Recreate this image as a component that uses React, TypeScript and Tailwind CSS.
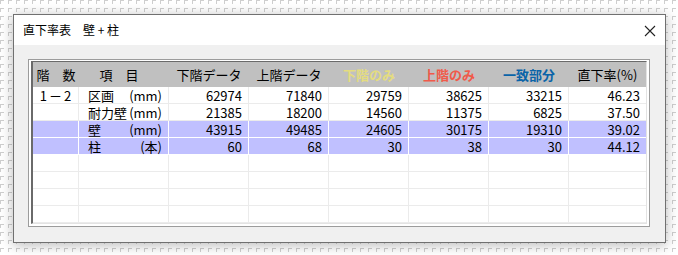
import React from "react";

type Row = { floor: string; item: string; unit: string; v: string[]; hl?: boolean };

const rows: Row[] = [
  { floor: "1－2", item: "区画", unit: "(mm)", v: ["62974", "71840", "29759", "38625", "33215", "46.23"] },
  { floor: "", item: "耐力壁", unit: "(mm)", v: ["21385", "18200", "14560", "11375", "6825", "37.50"] },
  { floor: "", item: "壁", unit: "(mm)", v: ["43915", "49485", "24605", "30175", "19310", "39.02"], hl: true },
  { floor: "", item: "柱", unit: "(本)", v: ["60", "68", "30", "38", "30", "44.12"], hl: true },
  { floor: "", item: "", unit: "", v: ["", "", "", "", "", ""] },
  { floor: "", item: "", unit: "", v: ["", "", "", "", "", ""] },
  { floor: "", item: "", unit: "", v: ["", "", "", "", "", ""] },
  { floor: "", item: "", unit: "", v: ["", "", "", "", "", ""] },
];

const headers = [
  { t: "階　数", c: "text-black" },
  { t: "項　目", c: "text-black pr-[10px]" },
  { t: "下階データ", c: "text-black" },
  { t: "上階データ", c: "text-black" },
  { t: "下階のみ", c: "text-[#e4dc80] font-bold" },
  { t: "上階のみ", c: "text-[#f05a4a] font-bold" },
  { t: "一致部分", c: "text-[#0a64a8] font-bold" },
  { t: "直下率(%)", c: "text-black" },
];

export default function App() {
  return (
    <div className="w-[678px] h-[255px] overflow-hidden bg-white bg-[image:linear-gradient(to_right,transparent_4px,#ffffff_4px),linear-gradient(to_bottom,transparent_4px,#ffffff_4px),linear-gradient(to_right,#cfcfcf_1px,transparent_1px),linear-gradient(to_bottom,#cfcfcf_1px,transparent_1px)] bg-[length:8px_8px] pl-[13px] pt-[14px] font-['Noto_Sans_CJK_JP',sans-serif] text-black">
      <div className="w-[653px] h-[229px] border border-[#707070] bg-[#f0f0f0] shadow-[0_2px_12px_rgba(0,0,0,0.28)] flex flex-col">
        <div className="h-[30px] bg-white flex items-center justify-between pl-[9px] pr-[9px] shrink-0">
          <span className="text-[12px] leading-[14px] whitespace-nowrap">直下率表　壁 + 柱</span>
          <svg width="12" height="12" viewBox="0 0 12 12" className="mt-[1px]">
            <path d="M1 1 L11 11 M11 1 L1 11" stroke="#222" strokeWidth="1.1" />
          </svg>
        </div>
        <div className="flex-1 pt-[14px] pl-[14px]">
          <div className="w-[622px] h-[168px] border border-[#9c9c9c] pt-px pb-[2px] pl-[2px] pr-[2px] bg-white">
            <div className="h-full border-t border-l-2 border-r border-b border-t-[#6a6a6a] border-l-[#6a6a6a] border-r-[#e3e3e3] border-b-[#e3e3e3] bg-white">
              <div className="grid grid-cols-[46px_90px_80px_80px_80px_80px_80px_77px] text-[13px] leading-[15px] whitespace-nowrap">
                {headers.map((h, i) => (
                  <div key={i} className={`h-[25px] bg-[#c0c0c0] flex items-center justify-center ${h.c}`}>
                    {h.t}
                  </div>
                ))}
                {rows.map((r, ri) => {
                  const bg = r.hl ? "bg-[#c0c0ff] border-white" : "bg-white border-[#ebebeb]";
                  return (
                    <React.Fragment key={ri}>
                      <div className={`h-[17px] border-r border-b ${bg} flex items-center justify-center tracking-[2px] pl-[2px]`}>{r.floor}</div>
                      <div className={`h-[17px] border-r border-b ${bg} flex items-center justify-between pl-[9px] pr-[6px]`}>
                        <span className="shrink-0 whitespace-nowrap">{r.item}</span>
                        <span className="shrink-0 whitespace-nowrap">{r.unit}</span>
                      </div>
                      {r.v.map((x, vi) => (
                        <div
                          key={vi}
                          className={`h-[17px] ${vi < 5 ? "border-r" : ""} border-b ${bg} flex items-center justify-end pr-[6px]`}
                        >
                          {x}
                        </div>
                      ))}
                    </React.Fragment>
                  );
                })}
              </div>
            </div>
          </div>
        </div>
      </div>
    </div>
  );
}
